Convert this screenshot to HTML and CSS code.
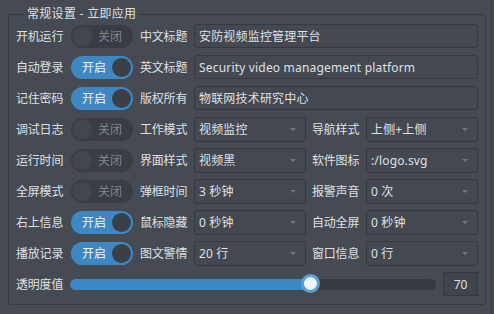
FILE: index.html
```html
<!DOCTYPE html>
<html lang="zh-CN">

<head>
    <meta charset="UTF-8" />
    <meta name="viewport" content="width=device-width, initial-scale=1.0" />
    <title>常规设置</title>
    <link rel="stylesheet" href="styles.css">
</head>

<body>
    <main class="page">
        <fieldset class="group">
            <legend>常规设置 - 立即应用</legend>

            <div class="form">
                <span class="label">开机运行</span>
                <span class="switch">关闭</span>
                <span class="label">中文标题</span>
                <input class="edit wide" type="text" value="安防视频监控管理平台">

                <span class="label">自动登录</span>
                <span class="switch on">开启</span>
                <span class="label">英文标题</span>
                <input class="edit wide" type="text" value="Security video management platform">

                <span class="label">记住密码</span>
                <span class="switch on">开启</span>
                <span class="label">版权所有</span>
                <input class="edit wide" type="text" value="物联网技术研究中心">

                <span class="label">调试日志</span>
                <span class="switch">关闭</span>
                <span class="label">工作模式</span>
                <span class="combo">视频监控</span>
                <span class="label">导航样式</span>
                <span class="combo">上侧+上侧</span>

                <span class="label">运行时间</span>
                <span class="switch">关闭</span>
                <span class="label">界面样式</span>
                <span class="combo">视频黑</span>
                <span class="label">软件图标</span>
                <span class="combo">:/logo.svg</span>

                <span class="label">全屏模式</span>
                <span class="switch">关闭</span>
                <span class="label">弹框时间</span>
                <span class="combo">3 秒钟</span>
                <span class="label">报警声音</span>
                <span class="combo">0 次</span>

                <span class="label">右上信息</span>
                <span class="switch on">开启</span>
                <span class="label">鼠标隐藏</span>
                <span class="combo">0 秒钟</span>
                <span class="label">自动全屏</span>
                <span class="combo">0 秒钟</span>

                <span class="label">播放记录</span>
                <span class="switch on">开启</span>
                <span class="label">图文警情</span>
                <span class="combo">20 行</span>
                <span class="label">窗口信息</span>
                <span class="combo">0 行</span>

                <span class="label">透明度值</span>
                <div class="slider-row">
                    <div class="slider">
                        <div class="slider-fill" style="width: 65.8%"></div>
                        <span class="slider-handle" style="left: 65.8%"></span>
                    </div>
                    <span class="spin">70</span>
                </div>
            </div>
        </fieldset>
    </main>
</body>

</html>
```

FILE: styles.css
```css
:root {
    --color-bg: rgb(70, 75, 83);
    --color-dark: rgb(53, 57, 64);
    --color-field: rgb(68, 73, 81);
    --color-text: rgb(222, 224, 228);
    --color-muted: rgb(128, 133, 141);
    --color-blue: rgb(61, 136, 195);
}

* {
    box-sizing: border-box;
}

body {
    margin: 0;
    background: var(--color-bg);
    color: var(--color-text);
    font-family: "Noto Sans", "Noto Sans CJK SC", sans-serif;
    font-size: 12px;
}

/* Outer page with the splitter line on the right */
.page {
    width: 492px;
    height: 314px;
    padding: 6px 5px 0 8px;
    border-right: 1px solid rgb(56, 60, 67);
}

.group {
    margin: 0;
    padding: 2px 7px 8px 7px;
    border: 1px solid var(--color-dark);
    border-radius: 3px;
}

.group legend {
    margin-left: 8px;
    padding: 0 3px;
    line-height: 16px;
    font-size: 12px;
    letter-spacing: 0.3px;
}

/* Six column form: label, switch, label, field, label, field */
.form {
    display: grid;
    grid-template-columns: 48px 64px 48px 1fr 48px 1fr;
    grid-auto-rows: 24px;
    column-gap: 6px;
    row-gap: 7px;
    align-items: center;
}

.label {
    white-space: nowrap;
    letter-spacing: -0.2px;
}

.wide {
    grid-column: 4 / -1;
}

/* Text input */
.edit {
    height: 24px;
    margin: 0;
    padding: 0 4px;
    border: 1px solid var(--color-dark);
    border-radius: 3px;
    background: var(--color-field);
    color: var(--color-text);
    font: inherit;
    letter-spacing: 0.18px;
    outline: none;
}

/* Combo box with arrow */
.combo {
    position: relative;
    display: flex;
    align-items: center;
    height: 25px;
    padding: 0 4px;
    border: 1px solid var(--color-dark);
    border-radius: 3px;
    background: var(--color-field);
    letter-spacing: 0.15px;
}

.combo::after {
    content: "";
    position: absolute;
    right: 9px;
    top: 10px;
    border-left: 3px solid transparent;
    border-right: 3px solid transparent;
    border-top: 3px solid rgb(112, 117, 124);
}

/* Toggle switch */
.switch {
    position: relative;
    display: flex;
    align-items: center;
    width: 62px;
    height: 23px;
    margin-left: 1px;
    padding-left: 27px;
    border-radius: 12px;
    background: rgb(57, 61, 68);
    color: var(--color-muted);
}

.switch::before {
    content: "";
    position: absolute;
    left: 1px;
    top: 1px;
    width: 21px;
    height: 21px;
    border-radius: 50%;
    background: rgb(66, 71, 79);
    box-shadow: inset 0 0 0 1px rgb(60, 64, 72);
}

.switch.on {
    padding-left: 11px;
    background: var(--color-blue);
    color: rgb(245, 247, 250);
}

.switch.on::before {
    left: auto;
    right: 2px;
    top: 2px;
    width: 19px;
    height: 19px;
    background: rgb(59, 64, 72);
    box-shadow: none;
}

/* Opacity slider and value box */
.slider-row {
    grid-column: 2 / -1;
    display: flex;
    align-items: center;
    gap: 7px;
    height: 24px;
}

.slider {
    position: relative;
    flex: 1;
    height: 11px;
    border-radius: 6px;
    background: rgb(54, 58, 65);
}

.slider-fill {
    height: 100%;
    border-radius: 6px 0 0 6px;
    background: var(--color-blue);
}

.slider-handle {
    position: absolute;
    top: 50%;
    width: 19px;
    height: 19px;
    margin: -10px 0 0 -10px;
    border: 3px solid rgb(88, 160, 212);
    border-radius: 50%;
    background: rgb(240, 244, 249);
}

.spin {
    display: flex;
    align-items: center;
    justify-content: center;
    width: 35px;
    height: 24px;
    border: 1px solid var(--color-dark);
    background: rgb(64, 69, 77);
}
```
